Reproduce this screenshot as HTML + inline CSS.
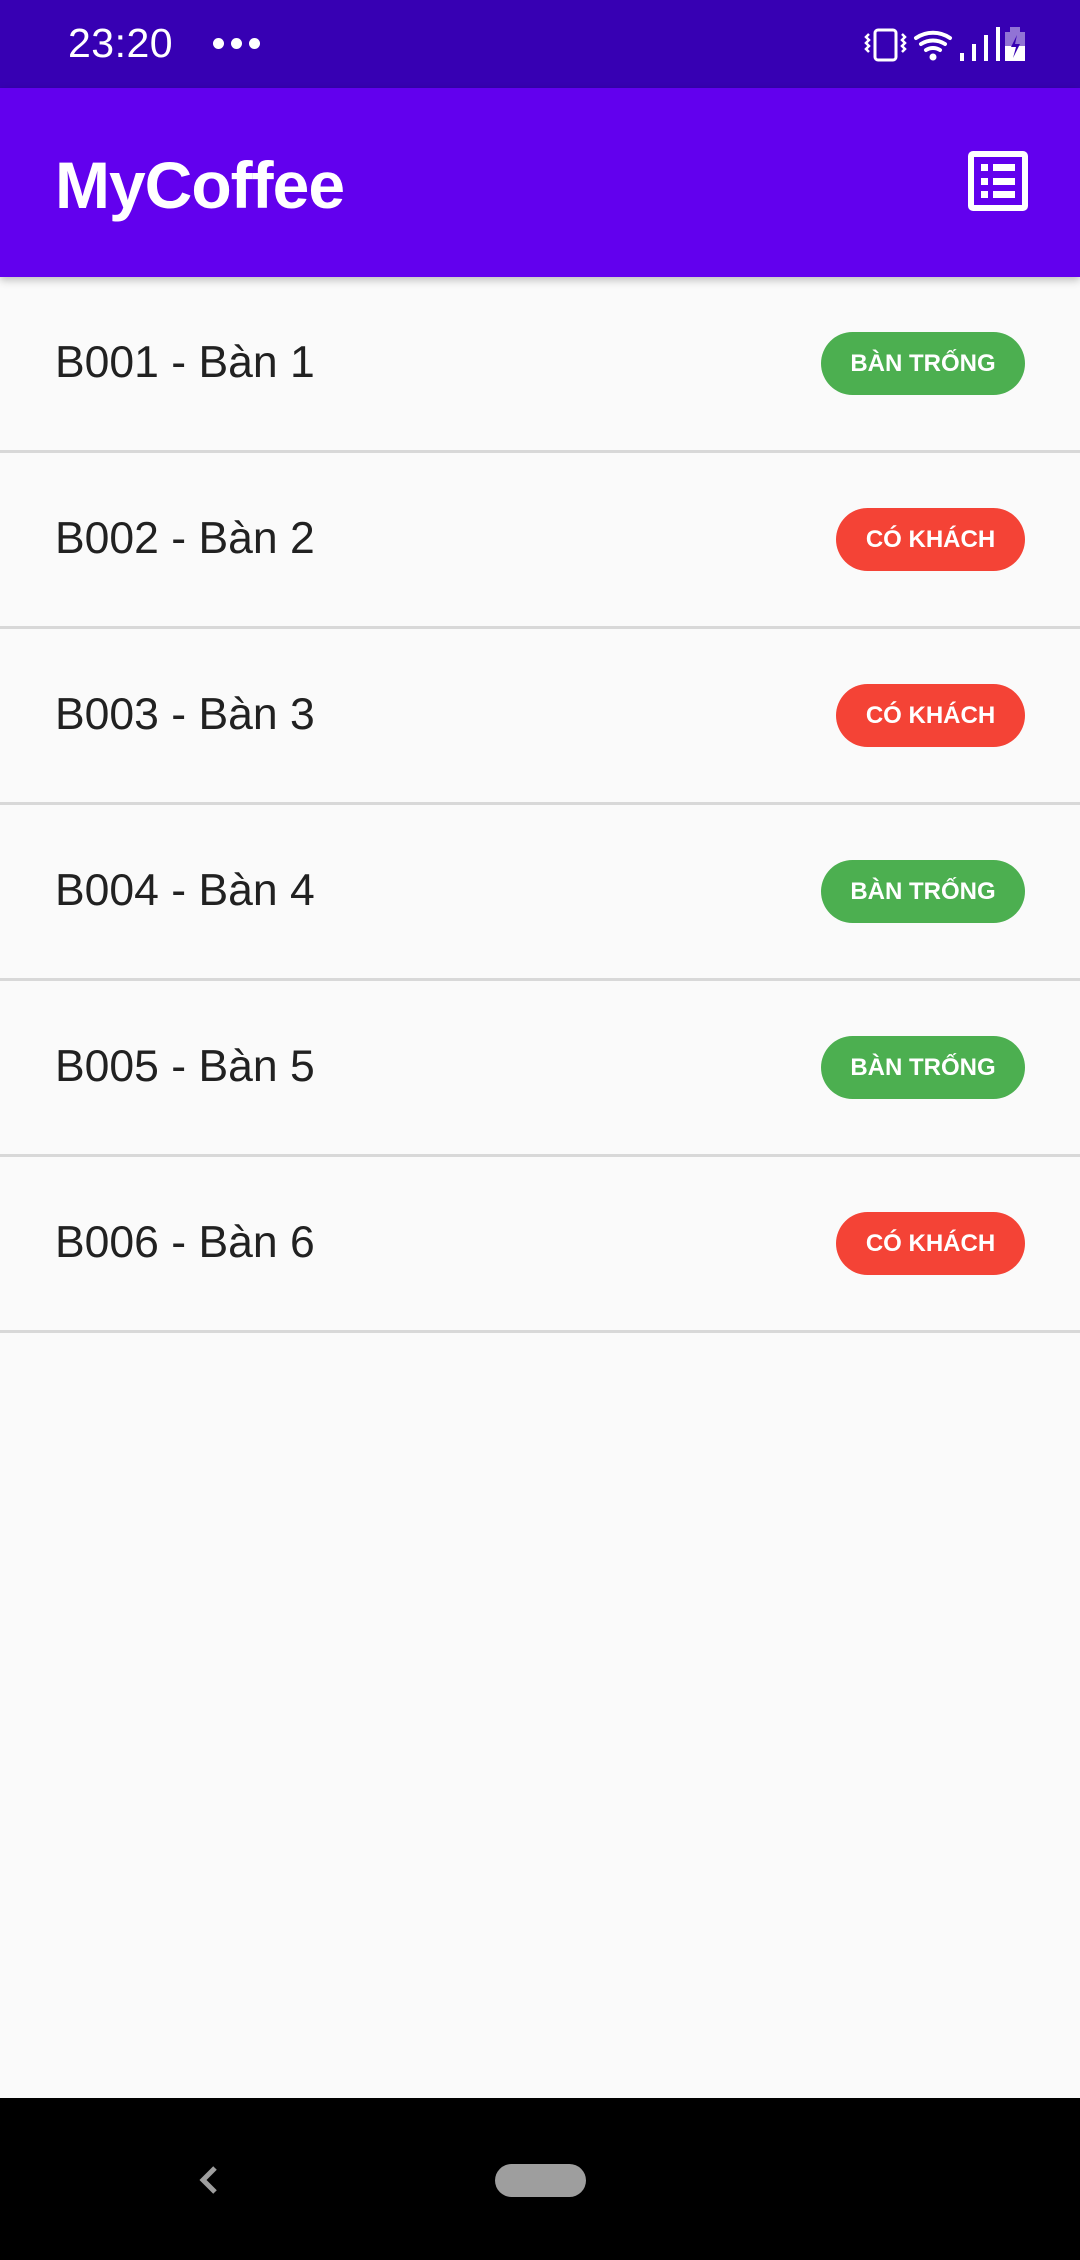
<!DOCTYPE html>
<html><head><meta charset="utf-8"><style>
*{margin:0;padding:0;box-sizing:border-box}
body{width:1080px;height:2260px;background:#fafafa;font-family:"Liberation Sans",sans-serif;position:relative;overflow:hidden}
.sb{position:absolute;left:0;top:0;width:1080px;height:88px;background:#3700b3;color:#fff}
.ab{position:absolute;left:0;top:88px;width:1080px;height:189px;background:#6200ee;box-shadow:0 3px 8px rgba(0,0,0,.25);z-index:2}
.title{position:absolute;left:55px;top:64px;font-size:66px;line-height:1;color:#fff;font-weight:bold;letter-spacing:-1px}
.row{position:absolute;left:0;width:1080px;height:176px;border-bottom:3px solid #d8d8d8}
.row .t{position:absolute;left:55px;top:50%;transform:translateY(-50%);font-size:44.5px;color:#212121;margin-top:-1px}
.chip{position:absolute;right:55px;top:55px;height:63px;border-radius:32px;color:#fff;font-weight:bold;font-size:24px;line-height:63px;text-align:center}
.g{background:#4caf50;width:204px}
.r{background:#f44336;width:189px}
.nav{position:absolute;left:0;top:2098px;width:1080px;height:162px;background:#000}
</style></head><body>
<div class="sb">
<div style="position:absolute;left:68px;top:23px;font-size:41px;line-height:1;letter-spacing:0.5px">23:20</div>
<div style="position:absolute;left:213px;top:38px;width:11px;height:11px;border-radius:50%;background:#fff;box-shadow:18px 0 #fff,36px 0 #fff"></div>
<svg style="position:absolute;left:850px;top:0" width="230" height="88" viewBox="0 0 230 88">
<rect x="25" y="30" width="21" height="30" rx="3" fill="none" stroke="#fff" stroke-width="3"/>
<path d="M19 34l-3 3 3 3-3 3 3 3-3 3 3 3M52 34l3 3-3 3 3 3-3 3 3 3-3 3" fill="none" stroke="#fff" stroke-width="2.5"/>
<path d="M66 38a30 30 0 0 1 34 0M71 44a22 22 0 0 1 24 0M76 50a13 13 0 0 1 14 0" fill="none" stroke="#fff" stroke-width="4" stroke-linecap="round"/>
<circle cx="83" cy="57" r="3.5" fill="#fff"/>
<path d="M112 61v-8M124 61v-17M136 61v-26M148 61v-34" stroke="#fff" stroke-width="4"/>
<rect x="155" y="32" width="20" height="29" fill="#fff" opacity=".45"/>
<rect x="160" y="27" width="10" height="5" fill="#fff" opacity=".45"/>
<rect x="155" y="46" width="20" height="15" fill="#fff"/>
<path d="M167 35l-6 12h5l-3 11 7-14h-5z" fill="#3700b3"/>
</svg>
</div>
<div class="ab"><div class="title">MyCoffee</div>
<svg style="position:absolute;left:968px;top:63px" width="60" height="60" viewBox="0 0 60 60">
<rect x="3" y="3" width="54" height="54" rx="2" fill="none" stroke="#fff" stroke-width="6"/>
<rect x="13" y="13" width="7" height="7" fill="#fff"/><rect x="25" y="13" width="22" height="7" fill="#fff"/>
<rect x="13" y="27" width="7" height="7" fill="#fff"/><rect x="25" y="27" width="22" height="7" fill="#fff"/>
<rect x="13" y="40" width="7" height="7" fill="#fff"/><rect x="25" y="40" width="22" height="7" fill="#fff"/>
</svg></div>
<div class="row" style="top:277px"><div class="t">B001 - Bàn 1</div><div class="chip g">BÀN TRỐNG</div></div>
<div class="row" style="top:453px"><div class="t">B002 - Bàn 2</div><div class="chip r">CÓ KHÁCH</div></div>
<div class="row" style="top:629px"><div class="t">B003 - Bàn 3</div><div class="chip r">CÓ KHÁCH</div></div>
<div class="row" style="top:805px"><div class="t">B004 - Bàn 4</div><div class="chip g">BÀN TRỐNG</div></div>
<div class="row" style="top:981px"><div class="t">B005 - Bàn 5</div><div class="chip g">BÀN TRỐNG</div></div>
<div class="row" style="top:1157px"><div class="t">B006 - Bàn 6</div><div class="chip r">CÓ KHÁCH</div></div>
<div class="nav">
<svg style="position:absolute;left:195px;top:66px" width="30" height="32"><path d="M20 4L8 16l12 12" fill="none" stroke="#9e9e9e" stroke-width="5"/></svg>
<div style="position:absolute;left:495px;top:66px;width:91px;height:33px;border-radius:17px;background:#9e9e9e"></div>
</div>
</body></html>
